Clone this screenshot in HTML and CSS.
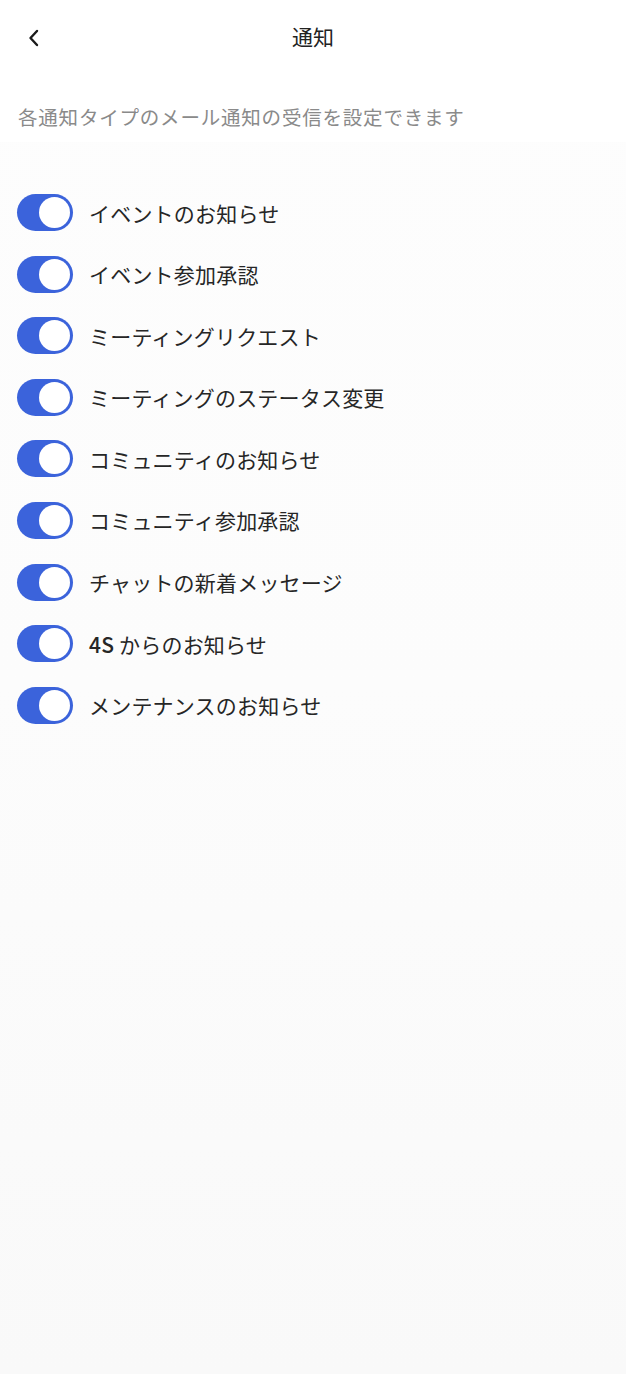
FILE: index.html
```html
<!DOCTYPE html>
<html lang="ja">
	<head>
		<meta charset="UTF-8">
		<meta name="viewport" content="width=device-width,initial-scale=1.0">
		<title>通知</title>
		<link rel="stylesheet" href="styles.css">
	</head>
	<body>
		<header class="top-bar">
			<a class="back-btn" href="#" aria-label="戻る">
				<svg width="14" height="18" viewBox="0 0 14 18"><path d="M10 2 L3.5 9 L10 16" fill="none" stroke="#1a1a1a" stroke-width="2.4" stroke-linecap="round" stroke-linejoin="round"/></svg>
			</a>
			<h1 class="top-title">通知</h1>
		</header>
		<section class="intro">
			<p>各通知タイプのメール通知の受信を設定できます</p>
		</section>
		<ul class="notify-list">
			<li class="notify-item"><span class="switch on"><i></i></span><span class="label">イベントのお知らせ</span></li>
			<li class="notify-item"><span class="switch on"><i></i></span><span class="label">イベント参加承認</span></li>
			<li class="notify-item"><span class="switch on"><i></i></span><span class="label">ミーティングリクエスト</span></li>
			<li class="notify-item"><span class="switch on"><i></i></span><span class="label">ミーティングのステータス変更</span></li>
			<li class="notify-item"><span class="switch on"><i></i></span><span class="label">コミュニティのお知らせ</span></li>
			<li class="notify-item"><span class="switch on"><i></i></span><span class="label">コミュニティ参加承認</span></li>
			<li class="notify-item"><span class="switch on"><i></i></span><span class="label">チャットの新着メッセージ</span></li>
			<li class="notify-item"><span class="switch on"><i></i></span><span class="label"><b>4S</b> からのお知らせ</span></li>
			<li class="notify-item"><span class="switch on"><i></i></span><span class="label">メンテナンスのお知らせ</span></li>
		</ul>
	</body>
</html>
```

FILE: styles.css
```css
*{margin:0;padding:0;box-sizing:border-box;}
html,body{height:100%;}
body{
	font-family:"Noto Sans CJK JP","Noto Sans",sans-serif;
	color:#222;
	background:linear-gradient(#fdfdfd 0%, #fcfcfc 50%, #f9f9f9 100%);
	min-height:1374px;
}
.top-bar{
	height:76px;
	display:grid;
	grid-template-columns:76px 1fr 76px;
	align-items:center;
	background:#fff;
}
.back-btn{
	display:flex;
	align-items:center;
	padding-left:27px;
	height:40px;
}
.top-title{
	font-size:21px;
	font-weight:400;
	text-align:center;
	color:#222;
	line-height:26px;
	margin-top:-4px;
}
.intro{
	background:#fff;
	padding:28px 18px 12px;
}
.intro p{
	font-size:19.5px;
	line-height:26px;
	color:#8a8a8a;
	letter-spacing:0.8px;
}
.notify-list{
	list-style:none;
	padding:52px 17px 0;
	display:flex;
	flex-direction:column;
	gap:24.6px;
}
.notify-item{
	display:flex;
	align-items:center;
	height:37px;
}
.switch{
	width:56px;
	height:37px;
	border-radius:19px;
	background:#ddd;
	display:flex;
	align-items:center;
	padding:0 3px;
	flex-shrink:0;
}
.switch.on{
	background:#3b63db;
	justify-content:flex-end;
}
.switch i{
	width:31px;
	height:31px;
	border-radius:50%;
	background:#fff;
}
.label{
	margin-left:16px;
	font-size:21px;
	color:#262626;
	line-height:30px;
	letter-spacing:0.2px;
}
.label b{
	font-weight:500;
}
```
